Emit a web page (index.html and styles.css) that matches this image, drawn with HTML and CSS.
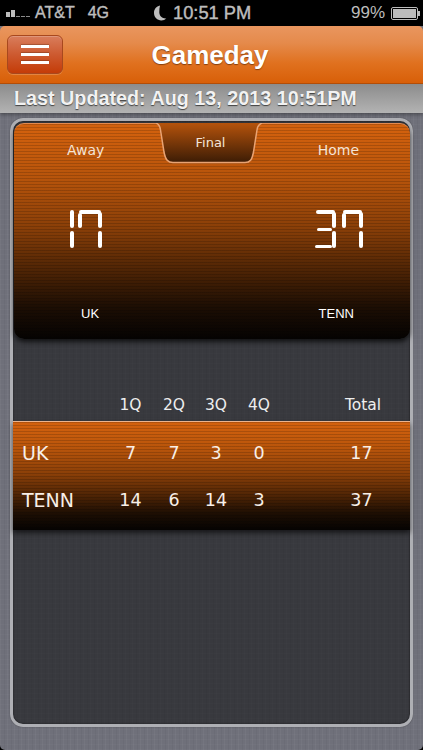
FILE: index.html
```html
<!DOCTYPE html>
<html lang="en">
<head>
<meta charset="utf-8">
<title>Gameday</title>
<link rel="stylesheet" href="styles.css">
</head>
<body>
<div class="screen">
  <div class="status">
    <div class="status-left">
      <span class="signal"><i class="b1"></i><i class="b2"></i><i class="b3"></i><i class="b3"></i><i class="b3"></i></span>
      <span class="carrier">AT&amp;T</span>
      <span class="network">4G</span>
    </div>
    <div class="status-center">
      <svg class="moon" viewBox="0 0 14 16" width="14" height="16"><path d="M7 0.6C3.3 1.4 1 4.3 1 8c0 4.3 3.300 7.400 7.300 7.400 2.100 0 3.700-.7 5-2-3.300.5-7-1.900-7-6.100C6.300 4.800 6.500 2.600 7 .6z" fill="#bdbdbd"/></svg>
      <span class="time">10:51 PM</span>
    </div>
    <div class="status-right">
      <span class="pct">99%</span>
      <span class="battery"><span class="battery-fill"></span></span><span class="battery-tip"></span>
    </div>
  </div>

  <header class="nav">
    <button class="menu" type="button" aria-label="Menu"><i></i><i></i><i></i></button>
    <h1 class="title">Gameday</h1>
  </header>

  <div class="updated">Last Updated: Aug 13, 2013 10:51PM</div>

  <main class="panel">
    <section class="card">
      <div class="notch">
        <svg class="notch-shape" viewBox="0 0 108 42" width="108" height="42">
          <defs><linearGradient id="ng" x1="0" y1="0" x2="0" y2="1"><stop offset="0" stop-color="#b5530c"/><stop offset="1" stop-color="#3c1c05"/></linearGradient></defs>
          <path d="M1 0C4 1 5 3 5.500 7L9 29C10.500 37 13 39.500 18 39.500H90C95 39.500 97 37 98.500 29L102 7C102.500 3 104 1 107 0Z" fill="url(#ng)"/>
          <path d="M1 0C4 1 5 3 5.500 7L9 29C10.500 37 13 39.500 18 39.500H90C95 39.500 97 37 98.500 29L102 7C102.500 3 104 1 107 0" fill="none" stroke="#e9a373" stroke-width="1.500"/>
        </svg>
        <span class="notch-label">Final</span>
      </div>
      <div class="card-row sides">
        <span class="side side-away">Away</span>
        <span class="side side-home">Home</span>
      </div>
      <div class="card-row scores">
        <div class="led led-away" role="img" aria-label="17">
          <span class="digit one"><i class="s-tr"></i><i class="s-br"></i></span>
          <span class="digit seven"><i class="s-t"></i><i class="s-tl"></i><i class="s-tr"></i><i class="s-br"></i></span>
        </div>
        <div class="led led-home" role="img" aria-label="37">
          <span class="digit three"><i class="s-t"></i><i class="s-tr"></i><i class="s-m"></i><i class="s-br"></i><i class="s-b"></i></span>
          <span class="digit seven"><i class="s-t"></i><i class="s-tl"></i><i class="s-tr"></i><i class="s-br"></i></span>
        </div>
      </div>
      <div class="card-row teams">
        <span class="team team-away">UK</span>
        <span class="team team-home">TENN</span>
      </div>
    </section>

    <section class="box">
      <div class="box-row box-head">
        <span></span><span>1Q</span><span>2Q</span><span>3Q</span><span>4Q</span><span></span><span>Total</span>
      </div>
      <div class="band">
        <div class="box-row line">
          <span class="name">UK</span><span>7</span><span>7</span><span>3</span><span>0</span><span></span><span class="total">17</span>
        </div>
        <div class="box-row line">
          <span class="name">TENN</span><span>14</span><span>6</span><span>14</span><span>3</span><span></span><span class="total">37</span>
        </div>
      </div>
    </section>
  </main>
</div>
</body>
</html>
```
FILE: styles.css
```css
* { box-sizing: border-box; }
html, body { margin: 0; padding: 0; background: #000; }
.screen {
  width: 423px;
  height: 750px;
  overflow: hidden;
  font-family: "DejaVu Sans", sans-serif;
  color: #fff;
  border-radius: 0 0 5px 5px;
  background-color: #6f707a;
  background-image:
    repeating-linear-gradient(90deg, rgba(255,255,255,.035) 0 1px, transparent 1px 4px, rgba(0,0,0,.035) 4px 5px, transparent 5px 7px),
    repeating-linear-gradient(0deg, rgba(255,255,255,.025) 0 1px, transparent 1px 5px);
}

/* status bar */
.status {
  height: 26px;
  background: #000;
  color: #bdbdbd;
  font-family: "Liberation Sans", sans-serif;
  display: grid;
  grid-template-columns: 153px 170px 100px;
  align-items: center;
}
.status-left { display: flex; align-items: center; padding-left: 6px; font-size: 16px; }
.signal { display: flex; align-items: flex-end; gap: 1px; width: 29px; height: 8px; }
.signal i { display: block; width: 4px; background: #bdbdbd; }
.signal .b1 { height: 5px; }
.signal .b2 { height: 7px; }
.signal .b3 { height: 1.500px; background: #8a8a8a; }
.carrier { -webkit-text-stroke: .4px #bdbdbd; }
.network { margin-left: 13px; -webkit-text-stroke: .4px #bdbdbd; }
.status-center { display: flex; align-items: center; gap: 6px; }
.moon { display: block; }
.time { font-size: 18.300px; -webkit-text-stroke: .4px #bdbdbd; }
.status-right { display: flex; align-items: center; padding-left: 28px; }
.pct { font-size: 17px; width: 40px; }
.battery { display: block; width: 27px; height: 13px; border: 1px solid #bdbdbd; padding: 1px; border-radius: 2px; }
.battery-fill { display: block; width: 100%; height: 100%; background: #bdbdbd; }
.battery-tip { display: block; width: 2px; height: 5px; background: #bdbdbd; }

/* nav */
.nav {
  height: 58px;
  display: flex;
  align-items: center;
  border-radius: 5px 5px 0 0;
  padding-left: 7px;
  border-bottom: 1px solid #b54f08;
  background: linear-gradient(#e9965f 0%, #e58a4b 30%, #e0711f 65%, #d85f08 100%);
}
.menu {
  width: 56px;
  height: 39px;
  padding: 0;
  flex: none;
  border: 1px solid #a8481e;
  border-radius: 6px;
  background: linear-gradient(#d97d5c, #cd5a30 50%, #c43c08);
  display: flex;
  flex-direction: column;
  align-items: center;
  justify-content: center;
  gap: 5px;
  box-shadow: inset 0 1px 0 rgba(255,255,255,.2), 0 1px 0 rgba(255,255,255,.2);
}
.menu i {
  display: block;
  width: 28px;
  height: 3px;
  background: #fff;
  box-shadow: 0 -1.500px 1px rgba(90,40,20,.7);
}
.title {
  margin: 0 0 0 48px;
  width: 198px;
  text-align: center;
  font: 700 26px/1 "Liberation Sans", sans-serif;
  color: #fff;
  text-shadow: 0 1px 1px rgba(110,50,10,.8);
}

/* update strip */
.updated {
  height: 29px;
  padding-left: 14px;
  font: 700 19.750px/29px "Liberation Sans", sans-serif;
  white-space: nowrap;
  color: #f2f2f2;
  text-shadow: 0 1px 1px rgba(40,40,40,.8);
  background: linear-gradient(#8c8c8c, #b3b3b3);
  box-shadow: 0 2px 3px rgba(0,0,0,.3);
}

/* panel */
.panel {
  margin: 5px 10px 0;
  height: 609px;
  border: 3px solid #aeafb4;
  border-radius: 13px;
  padding-top: 2px;
  background-color: #38393e;
  background-image:
    repeating-linear-gradient(90deg, rgba(255,255,255,.012) 0 1px, transparent 1px 4px, rgba(0,0,0,.03) 4px 5px, transparent 5px 7px),
    repeating-linear-gradient(0deg, rgba(255,255,255,.012) 0 1px, transparent 1px 5px);
  box-shadow: inset 0 0 2px rgba(0,0,0,.7), 0 0 1px rgba(0,0,0,.6);
}

.card, .band {
  background-image:
    repeating-linear-gradient(rgba(0,0,0,.16) 0 1px, transparent 1px 3px),
    linear-gradient(#d4620e 0%, #b7540b 25%, #8a3f08 48%, #552705 66%, #1d0e03 85%, #050302 100%);
}
.card {
  position: relative;
  margin-left: 1px;
  height: 216px;
  border-radius: 10px;
  border-top: 1px solid #e38a4f;
  box-shadow: 0 3px 5px rgba(0,0,0,.7);
  display: flex;
  flex-direction: column;
}
.notch { position: absolute; top: -1px; left: 141px; width: 108px; height: 42px; text-align: center; }
.notch-shape { display: block; }
.notch-label {
  position: absolute;
  left: 3px;
  right: 0;
  top: 12px;
  font-size: 13px;
  line-height: 16px;
  color: #f4e6da;
}
.card-row { display: flex; justify-content: space-between; flex: none; }

.sides { height: 48px; padding: 18px 51px 0 53px; }
.side { font-size: 14px; line-height: 17px; color: #f5e4d6; }

.scores { height: 85px; padding-top: 38px; align-items: flex-start; }
.led { display: flex; height: 38px; }
.led-away { margin-left: 56px; gap: 4px; }
.led-home { margin-right: 47px; gap: 6px; }

.digit {
  display: grid;
  height: 38px;
  grid-template-rows: 3.500px 1fr 3px 1fr 3.500px;
}
.digit i { display: block; background: #fff; border-radius: 2px; }
.digit.one { width: 4px; grid-template-columns: 4px; }
.digit.seven { width: 24px; grid-template-columns: 4px 1fr 4px; }
.led-home .digit.seven { width: 21px; }
.digit.three { width: 21px; grid-template-columns: 2px 1fr 4px; }

.s-t { grid-column: 1 / -1; grid-row: 1; margin: 0 1px; }
.s-m { grid-column: 1 / 3; grid-row: 3; margin-left: 2px; }
.s-b { grid-column: 1 / 3; grid-row: 5; }
.s-tl { grid-column: 1; grid-row: 1 / 3; margin-top: 3px; }
.s-tr { grid-column: -2; grid-row: 1 / 3; margin-top: 2px; }
.s-br { grid-column: -2; grid-row: 4 / 6; }
.digit.one .s-tr { grid-column: 1; grid-row: 1 / 3; margin-top: 0; }
.digit.one .s-br { grid-column: 1; grid-row: 4 / 6; }

.teams { height: 60px; padding: 49px 56px 0 67px; }
.team { font: 400 13px/16px "Liberation Sans", sans-serif; }

/* box score */
.box { margin-top: 49px; }
.box-row {
  display: grid;
  grid-template-columns: 97px 41px 46px 38px 48px 40px 80px;
  align-items: center;
  text-align: center;
  white-space: nowrap;
}
.box-head { height: 33px; font-size: 15.500px; color: #eee; }
.band {
  height: 109px;
  padding-top: 7px;
  border-top: 1.500px solid #ecb48e;
  box-shadow: 0 3px 5px rgba(0,0,0,.6);
}
.line { height: 47px; font-size: 17.500px; color: #f8efe8; }
.line .name { text-align: left; padding-left: 9px; font-size: 19px; }
.line .total { padding-right: 3px; }
```
